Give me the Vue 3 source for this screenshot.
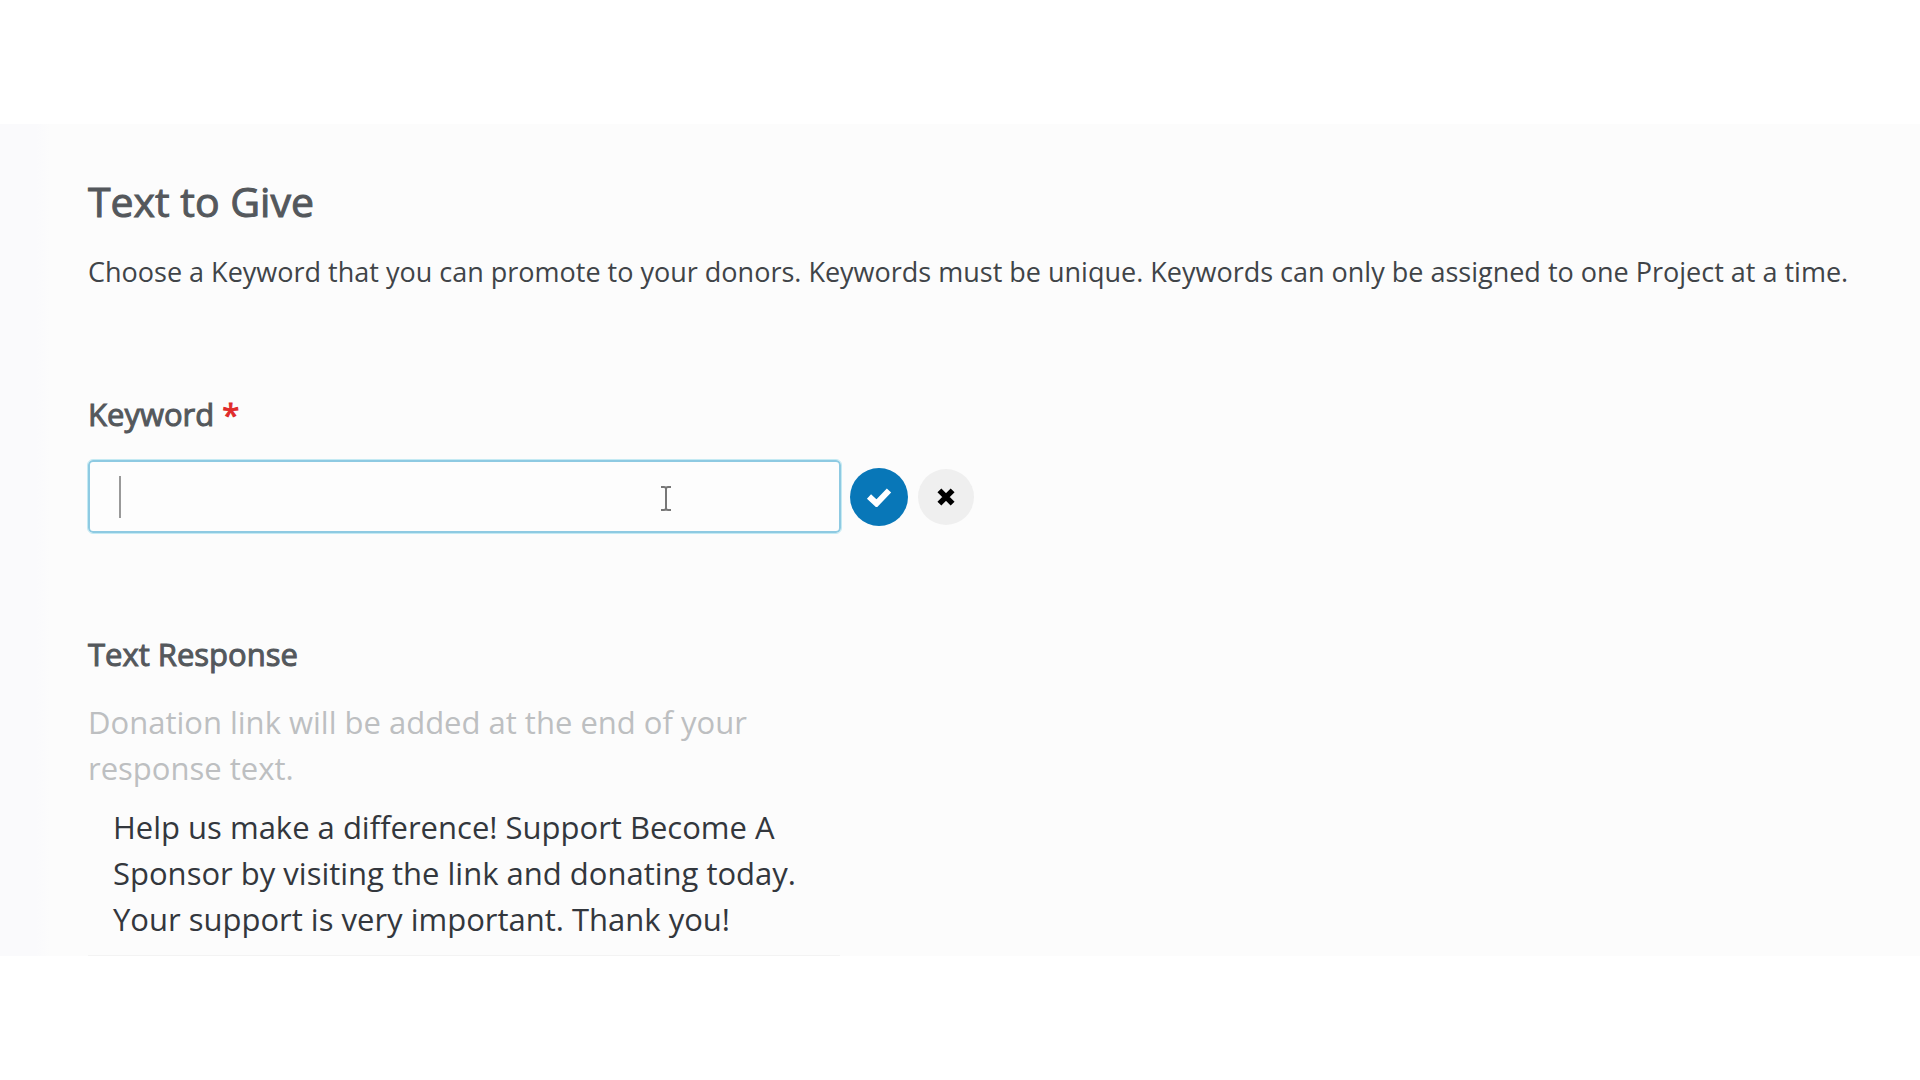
<script setup>
import { ref } from 'vue'

const keyword = ref('')
const response = ref(
  'Help us make a difference! Support Become A Sponsor by visiting the link and donating today. Your support is very important. Thank you!'
)
</script>

<template>
  <main class="panel">
    <form class="content" @submit.prevent>
      <h1 class="title">Text to Give</h1>
      <p class="intro">
        Choose a Keyword that you can promote to your donors. Keywords must be unique. Keywords can only be assigned to one Project at a time.
      </p>

      <label class="label" for="keyword">Keyword <span class="required">*</span></label>
      <div class="keyword-row">
        <div class="field">
          <input id="keyword" v-model="keyword" class="input" type="text" autocomplete="off" required />
          <span class="caret" aria-hidden="true"></span>
          <svg class="pointer" viewBox="0 0 12 27" aria-hidden="true">
            <path d="M1 2h3q2 0 2 2q0-2 2-2h3M6 4v19M1 25h3q2 0 2-2q0 2 2 2h3" />
          </svg>
        </div>
        <div class="actions">
          <button class="round save" type="submit" aria-label="Save keyword">
            <svg class="check" viewBox="0 0 26 20" aria-hidden="true">
              <path d="M3 9.500L10.500 16.500L23 3.500" />
            </svg>
          </button>
          <button class="round cancel" type="button" aria-label="Cancel">
            <svg class="cross" viewBox="0 0 20 20" aria-hidden="true">
              <path d="M4 4L16 16M16 4L4 16" />
            </svg>
          </button>
        </div>
      </div>

      <label class="label" for="response">Text Response</label>
      <p id="response-hint" class="hint">Donation link will be added at the end of your response text.</p>
      <textarea id="response" v-model="response" class="response" rows="3" spellcheck="false" aria-describedby="response-hint"></textarea>
    </form>
  </main>
</template>

<style>
body {
  margin: 0;
  background: #fff;
}
</style>

<style scoped>
.panel {
  margin: 124px 0;
  background: linear-gradient(to right, #fafafc 36px, #fcfcfc 50px);
  font-family: "Open Sans", "Noto Sans", sans-serif;
  color: #54585c;
}

.content {
  padding: 49px 32px 0 88px;
}

.title {
  margin: 0;
  font-size: 41px;
  line-height: 56px;
  font-weight: 500;
  -webkit-text-stroke: 1px currentColor;
}

.intro {
  margin: 21px 0 98px;
  font-size: 27px;
  line-height: 44px;
  font-weight: 500;
  color: #404448;
}

.label {
  display: block;
  font-size: 31px;
  line-height: 44px;
  font-weight: 500;
  -webkit-text-stroke: 1px currentColor;
}

.required {
  color: #e02b2b;
}

.keyword-row {
  display: flex;
  align-items: center;
  gap: 9px;
  margin: 24px 0 99px;
}

.field {
  position: relative;
  width: 753px;
}

.input {
  display: block;
  box-sizing: border-box;
  width: 100%;
  height: 73px;
  padding: 0 30px;
  border: 2px solid #8ecae2;
  border-radius: 5px;
  outline: 1px solid #c4eaf3;
  outline-offset: 0;
  background: #fdfdfd;
  color: #333;
  font: inherit;
  font-size: 31px;
}

.caret {
  position: absolute;
  top: 16px;
  left: 31px;
  width: 2px;
  height: 42px;
  background: #999;
}

.pointer {
  position: absolute;
  top: 25px;
  left: 572px;
  width: 12px;
  height: 27px;
  fill: none;
  stroke: #777;
  stroke-width: 2;
}

.actions {
  display: flex;
  align-items: center;
  gap: 10px;
}

.round {
  display: flex;
  align-items: center;
  justify-content: center;
  width: 58px;
  height: 58px;
  padding: 0;
  border: 0;
  border-radius: 50%;
}

.save {
  background: #0877b8;
}

.cancel {
  width: 56px;
  height: 56px;
  background: #efefef;
}

.check {
  width: 26px;
  height: 20px;
  fill: none;
  stroke: #fff;
  stroke-width: 6;
}

.cross {
  width: 22px;
  height: 22px;
  fill: none;
  stroke: #000;
  stroke-width: 5;
}

.hint {
  max-width: 752px;
  margin: 23px 0 13px;
  font-size: 31px;
  line-height: 46px;
  color: #bdbfc1;
}

.response {
  display: block;
  box-sizing: border-box;
  width: 752px;
  height: 152px;
  padding: 0 25px;
  border: 0;
  border-bottom: 1px solid #f3f3f3;
  background: transparent;
  color: #33373d;
  font: inherit;
  font-size: 31px;
  line-height: 46px;
  resize: none;
  overflow: hidden;
}
</style>
